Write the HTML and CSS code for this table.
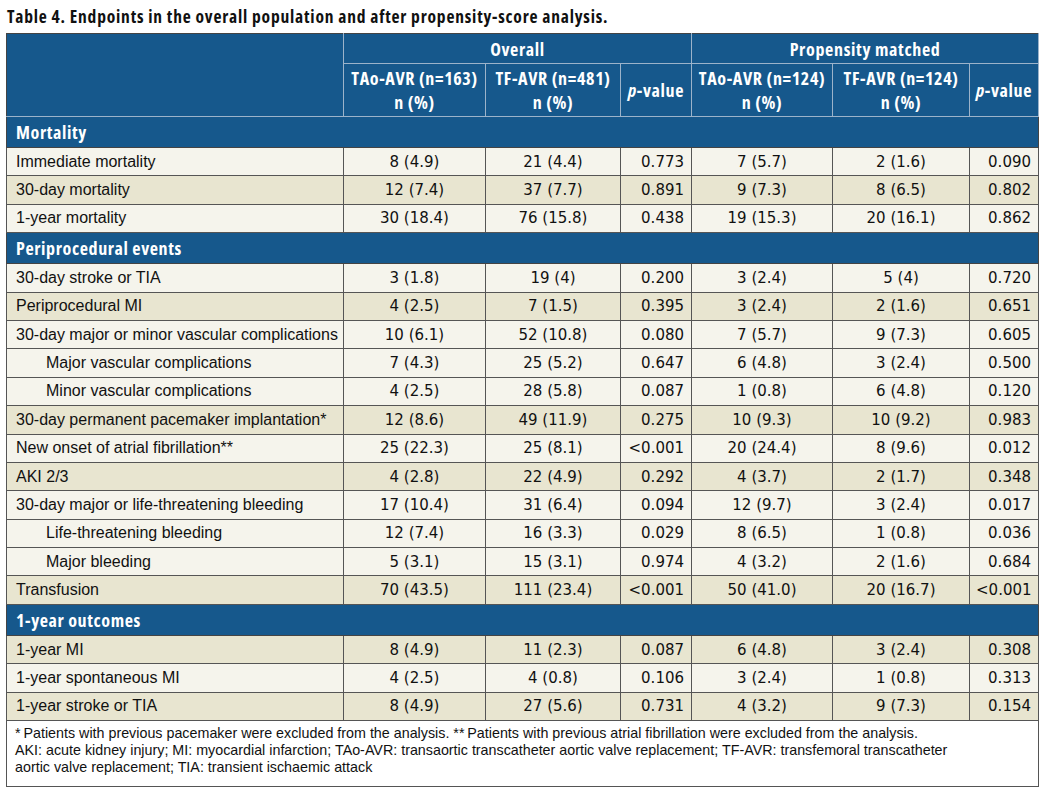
FILE: index.html
```html
<!DOCTYPE html>
<html>
<head>
<meta charset="utf-8">
<link rel="stylesheet" href="styles.css">
</head>
<body>
<h1 class="title">Table 4. Endpoints in the overall population and after propensity-score analysis.</h1>
<table class="tbl">
  <colgroup>
    <col class="c-label">
    <col class="c-n1">
    <col class="c-n2">
    <col class="c-p1">
    <col class="c-n3">
    <col class="c-n4">
    <col class="c-p2">
  </colgroup>
  <thead>
    <tr class="h1">
      <th rowspan="2" class="blank"></th>
      <th colspan="3">Overall</th>
      <th colspan="3">Propensity matched</th>
    </tr>
    <tr class="h2">
      <th>TAo-AVR (n=163)<br>n (%)</th>
      <th>TF-AVR (n=481)<br>n (%)</th>
      <th><i>p</i>-value</th>
      <th>TAo-AVR (n=124)<br>n (%)</th>
      <th>TF-AVR (n=124)<br>n (%)</th>
      <th><i>p</i>-value</th>
    </tr>
  </thead>
  <tbody>
    <tr class="sec"><td colspan="7">Mortality</td></tr>
    <tr class="lt"><td class="lbl">Immediate mortality</td><td>8 (4.9)</td><td>21 (4.4)</td><td class="p">0.773</td><td>7 (5.7)</td><td>2 (1.6)</td><td class="p">0.090</td></tr>
    <tr class="dk"><td class="lbl">30-day mortality</td><td>12 (7.4)</td><td>37 (7.7)</td><td class="p">0.891</td><td>9 (7.3)</td><td>8 (6.5)</td><td class="p">0.802</td></tr>
    <tr class="lt"><td class="lbl">1-year mortality</td><td>30 (18.4)</td><td>76 (15.8)</td><td class="p">0.438</td><td>19 (15.3)</td><td>20 (16.1)</td><td class="p">0.862</td></tr>
    <tr class="sec"><td colspan="7">Periprocedural events</td></tr>
    <tr class="lt"><td class="lbl">30-day stroke or TIA</td><td>3 (1.8)</td><td>19 (4)</td><td class="p">0.200</td><td>3 (2.4)</td><td>5 (4)</td><td class="p">0.720</td></tr>
    <tr class="dk"><td class="lbl">Periprocedural MI</td><td>4 (2.5)</td><td>7 (1.5)</td><td class="p">0.395</td><td>3 (2.4)</td><td>2 (1.6)</td><td class="p">0.651</td></tr>
    <tr class="lt"><td class="lbl">30-day major or minor vascular complications</td><td>10 (6.1)</td><td>52 (10.8)</td><td class="p">0.080</td><td>7 (5.7)</td><td>9 (7.3)</td><td class="p">0.605</td></tr>
    <tr class="lt"><td class="lbl ind">Major vascular complications</td><td>7 (4.3)</td><td>25 (5.2)</td><td class="p">0.647</td><td>6 (4.8)</td><td>3 (2.4)</td><td class="p">0.500</td></tr>
    <tr class="lt"><td class="lbl ind">Minor vascular complications</td><td>4 (2.5)</td><td>28 (5.8)</td><td class="p">0.087</td><td>1 (0.8)</td><td>6 (4.8)</td><td class="p">0.120</td></tr>
    <tr class="dk"><td class="lbl">30-day permanent pacemaker implantation*</td><td>12 (8.6)</td><td>49 (11.9)</td><td class="p">0.275</td><td>10 (9.3)</td><td>10 (9.2)</td><td class="p">0.983</td></tr>
    <tr class="lt"><td class="lbl">New onset of atrial fibrillation**</td><td>25 (22.3)</td><td>25 (8.1)</td><td class="p">&lt;0.001</td><td>20 (24.4)</td><td>8 (9.6)</td><td class="p">0.012</td></tr>
    <tr class="dk"><td class="lbl">AKI 2/3</td><td>4 (2.8)</td><td>22 (4.9)</td><td class="p">0.292</td><td>4 (3.7)</td><td>2 (1.7)</td><td class="p">0.348</td></tr>
    <tr class="lt"><td class="lbl">30-day major or life-threatening bleeding</td><td>17 (10.4)</td><td>31 (6.4)</td><td class="p">0.094</td><td>12 (9.7)</td><td>3 (2.4)</td><td class="p">0.017</td></tr>
    <tr class="lt"><td class="lbl ind">Life-threatening bleeding</td><td>12 (7.4)</td><td>16 (3.3)</td><td class="p">0.029</td><td>8 (6.5)</td><td>1 (0.8)</td><td class="p">0.036</td></tr>
    <tr class="lt"><td class="lbl ind">Major bleeding</td><td>5 (3.1)</td><td>15 (3.1)</td><td class="p">0.974</td><td>4 (3.2)</td><td>2 (1.6)</td><td class="p">0.684</td></tr>
    <tr class="dk"><td class="lbl">Transfusion</td><td>70 (43.5)</td><td>111 (23.4)</td><td class="p">&lt;0.001</td><td>50 (41.0)</td><td>20 (16.7)</td><td class="p">&lt;0.001</td></tr>
    <tr class="sec"><td colspan="7">1-year outcomes</td></tr>
    <tr class="dk"><td class="lbl">1-year MI</td><td>8 (4.9)</td><td>11 (2.3)</td><td class="p">0.087</td><td>6 (4.8)</td><td>3 (2.4)</td><td class="p">0.308</td></tr>
    <tr class="lt"><td class="lbl">1-year spontaneous MI</td><td>4 (2.5)</td><td>4 (0.8)</td><td class="p">0.106</td><td>3 (2.4)</td><td>1 (0.8)</td><td class="p">0.313</td></tr>
    <tr class="dk"><td class="lbl">1-year stroke or TIA</td><td>8 (4.9)</td><td>27 (5.6)</td><td class="p">0.731</td><td>4 (3.2)</td><td>9 (7.3)</td><td class="p">0.154</td></tr>
  </tbody>
  <tfoot>
    <tr class="foot"><td colspan="7">*&thinsp;Patients with previous pacemaker were excluded from the analysis. **&thinsp;Patients with previous atrial fibrillation were excluded from the analysis.<br>AKI: acute kidney injury; MI: myocardial infarction; TAo-AVR: transaortic transcatheter aortic valve replacement; TF-AVR: transfemoral transcatheter<br>aortic valve replacement; TIA: transient ischaemic attack</td></tr>
  </tfoot>
</table>
</body>
</html>
```

FILE: styles.css
```css
html, body {
  margin: 0;
  padding: 0;
  background: #ffffff;
}
body {
  padding: 6px 7px 0 6px;
  font-family: "Liberation Sans", Arial, sans-serif;
  color: #111;
}
.title {
  margin: 0 0 7px 1px;
  font-family: "Open Sans", "Liberation Sans", sans-serif;
  font-stretch: 75%;
  font-weight: bold;
  font-size: 17.5px;
  letter-spacing: 0.8px;
  line-height: 20px;
  white-space: nowrap;
  color: #111;
}
.tbl {
  border-collapse: collapse;
  table-layout: fixed;
  width: 1032px;
  border: 1px solid #444;
}
.c-label { width: 337px; }
.c-n1 { width: 142px; }
.c-n2 { width: 135px; }
.c-p1 { width: 71px; }
.c-n3 { width: 141px; }
.c-n4 { width: 137px; }
.c-p2 { width: 69px; }

thead th {
  background: #16588c;
  color: #fff;
  font-family: "Open Sans", "Liberation Sans", sans-serif;
  font-stretch: 75%;
  font-weight: bold;
  font-size: 18px;
  letter-spacing: 0.65px;
  line-height: 24px;
  text-align: center;
  padding: 0;
  white-space: nowrap;
  border: 1px solid #9cb3ca;
}
thead th.blank { border-left-color: #444; border-top-color: #444; }
.h1 th { height: 29px; border-top-color: #444; }
.h2 th { height: 52px; }
thead th i { font-style: italic; }

tbody td {
  font-family: "DejaVu Sans", sans-serif;
  font-size: 15px;
  line-height: 18px;
  height: 27.4px;
  padding: 0 6px;
  text-align: center;
  white-space: nowrap;
  border: 1px solid #555;
  color: #111;
}
tbody td.lbl {
  text-align: left;
  font-family: "Liberation Sans", Arial, sans-serif;
  font-size: 16px;
  padding: 0 0 0 9px;
}
tbody td.ind { padding-left: 39px; }
tbody td.p { text-align: right; padding-right: 7px; }

tr.lt td { background: #f5f4ec; }
tr.dk td { background: #e8e5d0; }

tr.sec td {
  background: #16588c;
  color: #fff;
  font-family: "Open Sans", "Liberation Sans", sans-serif;
  font-stretch: 75%;
  font-weight: bold;
  font-size: 18px;
  letter-spacing: 0.6px;
  text-align: left;
  padding-left: 9px;
  height: 30px;
  border-color: #444;
}

tr.foot td {
  background: #fff;
  font-family: "Liberation Sans", Arial, sans-serif;
  font-size: 14.3px;
  line-height: 17px;
  padding: 4px 6px 10px 8px;
  text-align: left;
  border: 1px solid #555;
  color: #111;
}
```
